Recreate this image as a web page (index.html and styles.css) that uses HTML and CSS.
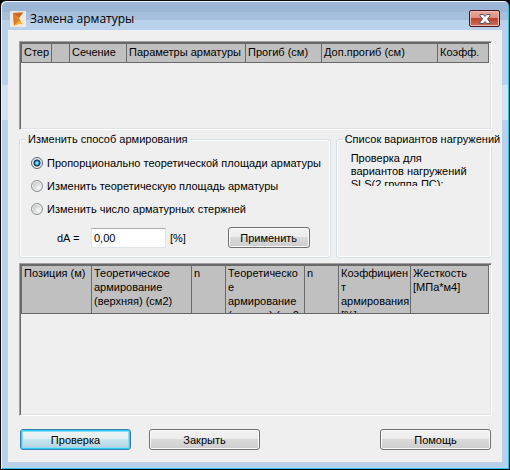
FILE: index.html
```html
<!DOCTYPE html>
<html lang="ru">
<head>
<meta charset="utf-8">
<title>Замена арматуры</title>
<link rel="stylesheet" href="styles.css">
</head>
<body>
<main class="window">
  <header class="titlebar">
    <svg class="app-icon" viewBox="0 0 16 16" aria-hidden="true">
      <rect width="16" height="16" fill="#f3e9dc"/>
      <path d="M0 0h16v3H0z" fill="#e9e5e1"/>
      <path d="M3 2l10-.5-4 5.500L11 11l-3 2-4 1z" fill="#e58a2c"/>
      <path d="M3 2l10-.5-4 5.500z" fill="#c9672b"/>
      <path d="M3 2l5 7-4 6z" fill="#dc7a25"/>
      <path d="M4 15l5-5 4 3-4 0z" fill="#f7b62c"/>
    </svg>
    <h1 class="title">Замена арматуры</h1>
    <button class="close" type="button" aria-label="Закрыть окно">
      <svg viewBox="0 0 12 10" width="12" height="10" aria-hidden="true">
        <path d="M1 .5h3.500L6 2.500 7.500.5H11v1.500L8.500 5 11 8v1.500H7.500L6 7.500 4.500 9.500H1V8l2.500-3L1 2z" fill="#fff" stroke="#53565f"/>
      </svg>
    </button>
  </header>
  <form class="content">
    <div class="grid-panel bars">
      <table class="grid">
        <colgroup><col class="w-bar"><col class="w-mark"><col class="w-section"><col class="w-params"><col class="w-defl"><col class="w-allow"><col></colgroup>
        <thead><tr><th>Стер</th><th></th><th>Сечение</th><th>Параметры арматуры</th><th>Прогиб (см)</th><th>Доп.прогиб (см)</th><th>Коэфф.</th></tr></thead>
      </table>
    </div>
    <div class="groups">
      <fieldset class="group method">
        <legend>Изменить способ армирования</legend>
        <label class="option"><input type="radio" name="method" checked>Пропорционально теоретической площади арматуры</label>
        <label class="option"><input type="radio" name="method">Изменить теоретическую площадь арматуры</label>
        <label class="option"><input type="radio" name="method">Изменить число арматурных стержней</label>
        <div class="delta">
          <label class="delta-label" for="delta">dA =</label>
          <input class="field" id="delta" type="text" value="0,00">
          <span class="unit">[%]</span>
          <button class="btn apply" type="button">Применить</button>
        </div>
      </fieldset>
      <fieldset class="group cases">
        <legend>Список вариантов нагружений</legend>
        <p class="note">Проверка для<br>вариантов нагружений<br>SLS(2 группа ПС):</p>
      </fieldset>
    </div>
    <div class="grid-panel results">
      <table class="grid tall">
        <colgroup><col class="w-pos"><col class="w-top"><col class="w-n"><col class="w-bottom"><col class="w-n"><col class="w-ratio"><col></colgroup>
        <thead><tr>
          <th><div class="head">Позиция (м)</div></th>
          <th><div class="head">Теоретическое армирование (верхняя) (см2)</div></th>
          <th><div class="head">n</div></th>
          <th><div class="head">Теоретическо<br>е<br>армирование<br>(нижняя) (см2</div></th>
          <th><div class="head">n</div></th>
          <th><div class="head">Коэффициен<br>т<br>армирования<br>[%]</div></th>
          <th><div class="head">Жесткость<br>[МПа*м4]</div></th>
        </tr></thead>
      </table>
    </div>
    <footer class="actions">
      <button class="btn wide primary" type="button">Проверка</button>
      <button class="btn wide" type="button">Закрыть</button>
      <button class="btn wide help" type="button">Помощь</button>
    </footer>
  </form>
</main>
</body>
</html>
```
FILE: styles.css
```css
* { box-sizing: border-box; }

body {
  margin: 0;
  background: #000;
  color: #000;
  font: 11px/14px "Liberation Sans", Arial, sans-serif;
}

.window {
  display: flex;
  flex-direction: column;
  min-height: 100vh;
  padding: 0 6px 6px;
  border: 1px solid #0a0a0c;
  border-radius: 6px 6px 0 0;
  background: linear-gradient(#9cb6d5 0 11px, #a5bfdc 11px 19px, #b9d1ea 19px 84px, #d2e3f5 84px 119px, #b9d1ea 119px);
  box-shadow: inset 1px 1px #eef5fc, inset -1px -1px #22c8ee;
}

.titlebar {
  display: flex;
  align-items: center;
  height: 29px;
  padding: 6px 3px 0;
}

.app-icon { width: 16px; height: 16px; }

.title {
  flex: 1;
  margin: 0 0 0 4px;
  font: 12px/16px "Open Sans", "Noto Sans", sans-serif;
}

.close {
  display: flex;
  align-items: center;
  justify-content: center;
  width: 31px;
  height: 17px;
  padding: 0;
  border: 1px solid #47171d;
  border-radius: 2px;
  background: linear-gradient(#e9a99d, #dc8d7f 48%, #bd432c 50%, #d0705e);
  box-shadow: inset 0 0 0 1px #eab9b0;
}

.content {
  flex: 1;
  display: flex;
  flex-direction: column;
  margin: 0 1px 1px;
  padding: 11px 10px 12px 11px;
  background: #efefef;
}

.grid-panel {
  border: 1px solid;
  border-color: #a0a0a0 #fff #fff #a0a0a0;
  box-shadow: inset 1px 1px #696969, inset -1px -1px #dfe3e3;
  padding: 1px 2px 2px 1px;
}

.bars { height: 89px; }
.results { flex: 1; margin-top: 5px; }

.grid {
  width: 100%;
  table-layout: fixed;
  border-collapse: collapse;
}

.grid th {
  height: 19px;
  padding: 0 0 2px 2px;
  border: 1px solid #696969;
  background: #c0c0c0;
  font-weight: normal;
  text-align: left;
  vertical-align: middle;
  white-space: nowrap;
}

.grid.tall th {
  padding: 0 0 0 2px;
  vertical-align: top;
  white-space: normal;
}

.head { height: 47px; overflow: hidden; }

.w-bar { width: 30px; }
.w-mark { width: 18px; }
.w-section { width: 57px; }
.w-params { width: 119px; }
.w-defl { width: 76px; }
.w-allow { width: 116px; }
.w-pos { width: 70px; }
.w-top { width: 100px; }
.w-n { width: 34px; }
.w-bottom { width: 79px; }
.w-ratio { width: 72px; }

.groups {
  display: flex;
  gap: 5px;
  margin-top: 2px;
}

.group {
  min-width: 0;
  margin: 0;
  padding: 5px 8px 9px 6px;
  border: 1px solid #d5dfe5;
  border-radius: 3px;
  box-shadow: inset 0 0 0 1px #fff;
}

.group legend {
  padding: 0 2px;
  white-space: nowrap;
}

.method { flex: 295 1 0; }
.cases { flex: 140 1 0; }

.option {
  display: flex;
  align-items: center;
  height: 23px;
  padding-left: 5px;
  white-space: nowrap;
}

.option input {
  appearance: none;
  flex: none;
  width: 12px;
  height: 12px;
  margin: 0 4px 0 0;
  border: 1px solid #8e8f8f;
  border-radius: 50%;
  background: radial-gradient(circle at 65% 65%, #fafafa, #c5cacd 65%);
  box-shadow: inset 0 0 0 1px #f4f4f4;
}

.option input:checked {
  border-color: #5c6670;
  background: radial-gradient(circle, #8fe0fa 0 1px, #1681b5 2px, #0b3355 3px, #d4d9dc 4px);
}

.delta {
  display: flex;
  align-items: center;
  margin-top: 7px;
  padding-left: 31px;
}

.delta-label { width: 34px; }

.field {
  width: 75px;
  height: 20px;
  padding: 0 2px;
  border: 1px solid #e2e3ea;
  border-top-color: #abadb3;
  background: #fff;
  font: inherit;
}

.unit { margin-left: 4px; }

.btn {
  height: 21px;
  padding: 0;
  border: 1px solid #707070;
  border-radius: 3px;
  background: linear-gradient(#f3f3f3, #ebebeb 48%, #dadada 50%, #cdcdcd);
  box-shadow: inset 0 0 0 1px #fafafa;
  color: #000;
  font: inherit;
}

.apply { width: 82px; margin: 0 12px 0 auto; }
.wide { width: 111px; }

.primary {
  border-color: #3c7fb1;
  background: linear-gradient(#f0f4f5, #e4eef0 48%, #c6e8ee 50%, #b4cddf);
  box-shadow: inset 0 0 0 1px #2ccdf5, inset 0 0 0 2px #8adff5;
}

.note {
  height: 35px;
  margin: 0 0 0 8px;
  padding-top: 1px;
  overflow: hidden;
  line-height: 13px;
  white-space: nowrap;
}

.actions {
  display: flex;
  gap: 18px;
  margin-top: 13px;
  padding: 0 1px;
}

.help { margin-left: auto; }
```
